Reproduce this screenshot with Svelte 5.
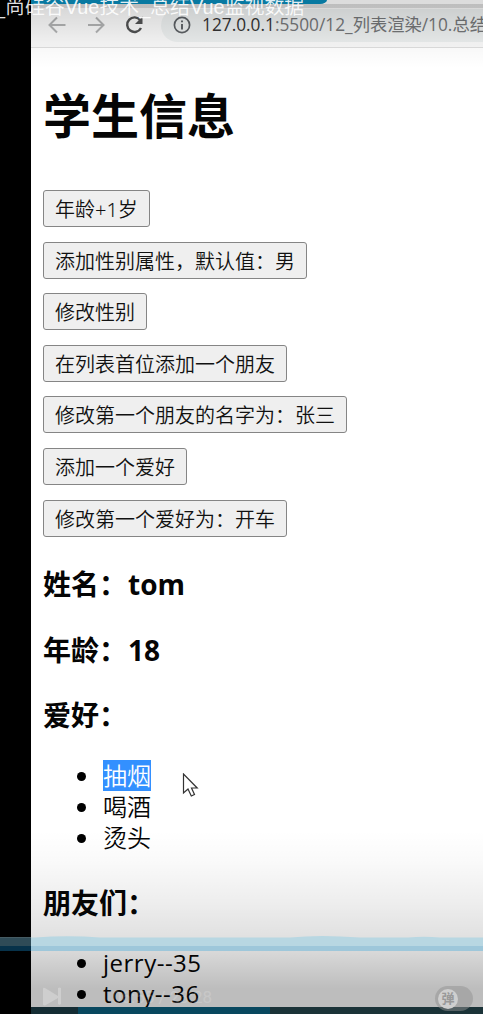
<script>
  const actions = ['年龄+1岁', '添加性别属性，默认值：男', '修改性别', '在列表首位添加一个朋友', '修改第一个朋友的名字为：张三', '添加一个爱好', '修改第一个爱好为：开车'];
  const hobbies = ['抽烟', '喝酒', '烫头'];
  const friends = [{ name: 'jerry', age: 35 }, { name: 'tony', age: 36 }];
</script>

<div class="player">
  <div class="browser">
    <div class="tabs"><div class="tab-strip"></div></div>
    <div class="toolbar">
      <svg class="nav" width="100" height="24" viewBox="0 0 100 24" fill="none">
        <path d="M18.500 12H3M10 4.500L2.500 12L10 19.500" stroke="#b0b1b2" stroke-width="2" />
        <path d="M41 12H56M49 4.500L56.500 12L49 19.500" stroke="#b0b1b2" stroke-width="2" />
        <path d="M93.300 7.200A7.300 7.300 0 1 0 94 15" stroke="#505152" stroke-width="2.400" />
        <path d="M95.500 3.500V11H88Z" fill="#505152" />
      </svg>
      <div class="address">
        <svg width="18" height="18" viewBox="0 0 18 18" fill="none">
          <circle cx="9" cy="9" r="7.600" stroke="#5c6064" stroke-width="1.700" />
          <path d="M9 8V13.500M9 4.500V6.300" stroke="#5c6064" stroke-width="1.900" />
        </svg>
        <span class="url"><b>127.0.0.1</b>:5500/12_列表渲染/10.总结</span>
      </div>
    </div>
    <main>
      <h1>学生信息</h1>
      <div class="actions">
        {#each actions as action}
          <button>{action}</button>
        {/each}
      </div>
      <h3>姓名：<span class="value">tom</span></h3>
      <h3>年龄：<span class="value">18</span></h3>
      <h3>爱好：</h3>
      <ul>
        {#each hobbies as hobby, i}
          <li><span class:selected={i === 0}>{hobby}</span></li>
        {/each}
      </ul>
      <h3 class="friends">朋友们：</h3>
      <ul class="people">
        {#each friends as friend}
          <li><span>{friend.name}--{friend.age}</span></li>
        {/each}
      </ul>
    </main>
  </div>

  <div class="shade top"></div>
  <div class="shade bottom"></div>
  <div class="taskbar"><i></i><b></b></div>
  <div class="title">_尚硅谷Vue技术_总结Vue监视数据</div>
  <svg class="cursor" width="18" height="26" viewBox="0 0 18 26">
    <path d="M1.500 1V20L6 16L9.300 23L12.500 21.500L9.500 15H15.200Z" fill="#fff" stroke="#333" stroke-width="1.200" />
  </svg>
  <svg class="progress" width="483" height="17" viewBox="0 0 483 17">
    <path d="M0 2.500H35Q68 .2 100 2.500H290Q320 -.5 360 2.500H408Q424 .8 440 2.500H483V11H0Z" fill="#b8d7e2" />
    <path d="M0 2.500H31V11H0Z" fill="#2f4b57" />
    <path d="M0 11H31V16H0Z" fill="#07324a" />
    <path d="M31 11H483V16H31Z" fill="#9ec7da" />
  </svg>
  <svg class="next" width="22" height="22" viewBox="0 0 22 22" fill="#cecece">
    <path d="M1 3Q1 1 3 2L16 10V2Q17.500 .8 19 2V18Q17.500 19.500 16 18V12L3 19.500Q1 20 1 18Z" />
  </svg>
  <div class="time">06:55 / 23:28</div>
  <div class="toggle"><span>弹</span></div>
</div>

<style>
  :global(body) { margin: 0; background: #000; }
  .player { position: relative; width: 483px; height: 1014px; overflow: hidden; background: #000; font-family: "Open Sans", "Noto Sans CJK SC", sans-serif; color: #050505; }
  .browser { display: flex; flex-direction: column; margin-left: 31px; height: 1014px; background: #fff; }
  .tabs { height: 8px; background: #dcdcdc; }
  .tab-strip { width: 296px; height: 4px; background: #0879a1; border-bottom-right-radius: 7px 4px; }
  .toolbar { display: flex; flex: none; box-sizing: border-box; height: 40px; border-bottom: 1px solid #dedede; background: #f8f8f8; align-items: center; overflow: hidden; }
  .nav { flex: none; margin: 0 0 5px 16px; }
  .address { display: flex; flex: none; align-items: center; box-sizing: border-box; width: 420px; height: 33px; margin: -5px 0 0 14px; padding-left: 12px; border-radius: 17px; background: #ebeeee; }
  .url { margin-left: 11px; font-size: 17.300px; line-height: 28px; color: #737577; white-space: nowrap; }
  .url b { font-weight: 400; color: #333; }
  main { padding: 0 12px; }
  h1 { margin: 32px 0 39px; font-size: 48px; line-height: 71px; font-weight: 700; }
  .actions { display: flex; flex-direction: column; align-items: flex-start; gap: 14.600px; }
  button { box-sizing: border-box; height: 37px; padding: 2px 11px 0; border: 1px solid #858585; border-radius: 3px; background: #efefef; font: 350 20px/33px "Noto Sans", "Noto Sans CJK SC", sans-serif; color: #111; white-space: nowrap; }
  h3 { position: relative; top: 1.500px; margin: 28px 0; font-size: 28px; line-height: 37.500px; font-weight: 700; }
  .friends { top: 3.500px; }
  .value { margin-left: 1px; font-weight: 700; }
  ul { margin: -1px 0 0; padding-left: 60px; list-style: none; font-size: 24px; font-weight: 350; }
  .people { position: relative; top: 1px; font-weight: 400; letter-spacing: .5px; }
  li { position: relative; height: 31.200px; line-height: 32px; }
  li::before { content: ""; position: absolute; left: -26px; top: 12px; width: 9px; height: 9px; border-radius: 50%; background: #000; }
  li span { display: inline-block; height: 31px; }
  .selected { background: #3390ff; color: #fff; }
  .shade { position: absolute; left: 31px; right: 0; }
  .top { top: 4px; height: 64px; background: linear-gradient(rgba(0,0,0,.14), rgba(0,0,0,.035) 60%, transparent); }
  .bottom { top: 830px; height: 184px; background: linear-gradient(transparent, rgba(0,0,0,.02) 16%, rgba(0,0,0,.07) 40%, rgba(0,0,0,.13) 62%, rgba(0,0,0,.26) 86%, rgba(0,0,0,.26)); }
  .taskbar { position: absolute; display: flex; left: 31px; right: 0; top: 1007px; height: 7px; background: #1b3338; }
  .taskbar i { width: 47px; background: #152d34; }
  .taskbar b { width: 192px; background: #08485f; }
  .title { position: absolute; left: -6px; top: -7px; font: 350 19.900px/28px "Liberation Sans", "Noto Sans CJK SC", sans-serif; color: rgba(255,255,255,.9); white-space: nowrap; }
  .cursor { position: absolute; left: 182px; top: 773px; }
  .progress { position: absolute; left: 0; top: 935px; }
  .next { position: absolute; left: 42px; top: 986px; }
  .time { position: absolute; left: 112px; top: 986px; font: 17px/22px Roboto, sans-serif; color: rgba(255,255,255,.18); white-space: nowrap; }
  .toggle { position: absolute; box-sizing: border-box; left: 435px; top: 986px; width: 38px; height: 25px; padding: 3px; border-radius: 13px; background: rgba(145,145,145,.5); }
  .toggle span { display: block; width: 20px; height: 20px; border-radius: 50%; background: #cfcfcf; color: #999; font-size: 13px; line-height: 19px; text-align: center; font-weight: 700; }
</style>
